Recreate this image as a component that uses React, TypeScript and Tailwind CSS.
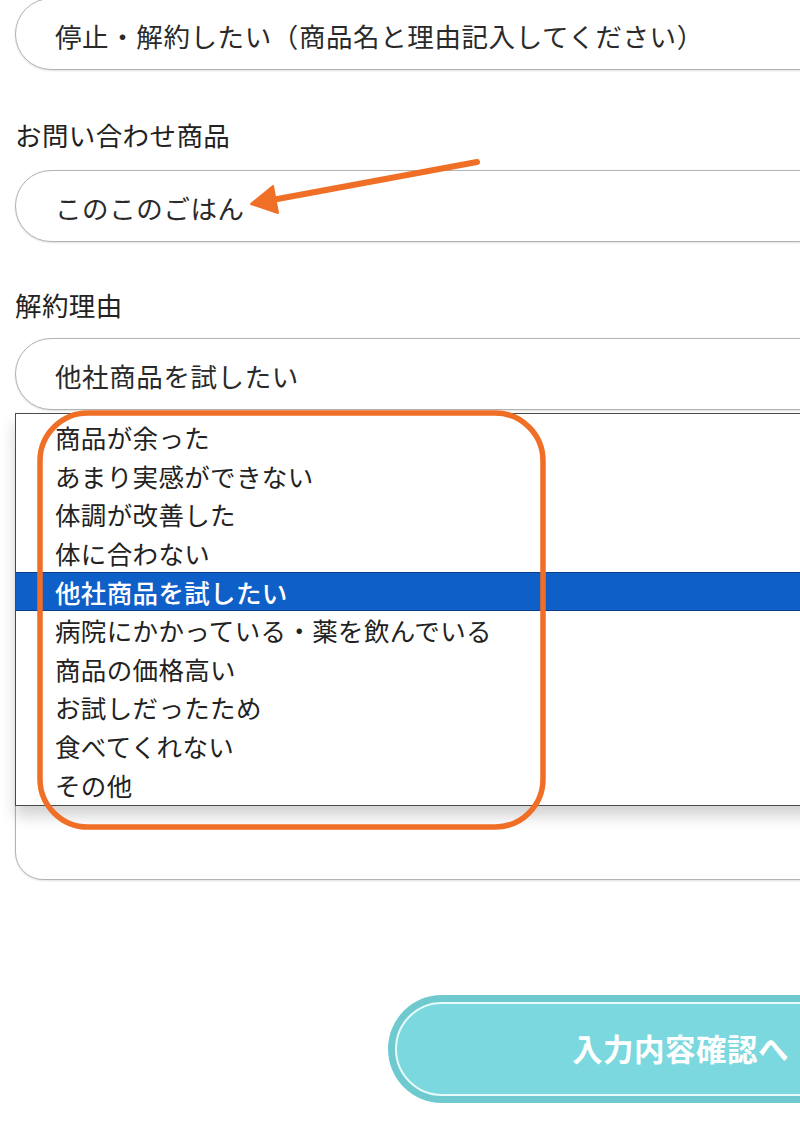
const REASONS = [
  "商品が余った",
  "あまり実感ができない",
  "体調が改善した",
  "体に合わない",
  "他社商品を試したい",
  "病院にかかっている・薬を飲んでいる",
  "商品の価格高い",
  "お試しだったため",
  "食べてくれない",
  "その他",
];

const SELECTED = "他社商品を試したい";

function Field({ value, className = "" }: { value: string; className?: string }) {
  return (
    <div
      className={`flex h-[72px] w-[820px] items-center rounded-[36px] border border-[#b3b3b3] bg-white pl-[39px] pt-[4px] text-[26.5px] tracking-[0.6px] text-[#2a2a2a] shadow-[0_1px_2px_rgba(0,0,0,0.12)] ${className}`}
    >
      {value}
    </div>
  );
}

function Label({ children, className = "" }: { children: string; className?: string }) {
  return (
    <div className={`h-[36px] text-[26.5px] leading-[36px] tracking-[0.4px] text-[#222] ${className}`}>
      {children}
    </div>
  );
}

export default function App() {
  return (
    <div
      className="relative h-[1129px] w-[800px] overflow-hidden bg-white"
      style={{ fontFamily: '"Noto Sans CJK JP", "Noto Sans", sans-serif' }}
    >
      <div className="flex flex-col pl-[15px]">
        <Field value="停止・解約したい（商品名と理由記入してください）" className="-mt-[2px]" />

        <Label className="mt-[47px]">お問い合わせ商品</Label>
        <Field value="このこのごはん" className="mt-[17px]" />

        <Label className="mt-[45px]">解約理由</Label>
        <Field value={SELECTED} className="mt-[15px]" />

        {/* textarea, mostly covered by the open list */}
        <div className="mt-[15px] h-[455px] w-[820px] rounded-[28px] border border-[#b3b3b3] bg-white shadow-[0_1px_2px_rgba(0,0,0,0.12)]" />

        {/* submit */}
        <div className="ml-[373px] mt-[115px] h-[108px] w-[589px] rounded-full bg-[#6fcad0] p-[7px]">
          <div className="flex h-full items-center justify-center rounded-full border-2 border-[#e8fbfb] bg-[#7bd8de]">
            <span className="pr-[4px] text-[30.5px] font-bold tracking-[0.5px] text-white">
              入力内容確認へ
            </span>
          </div>
        </div>
      </div>

      {/* open select list */}
      <div className="absolute left-[15px] top-[413px] w-[800px] border border-[#4a4a4a] bg-white pb-[1px] pt-[4px] shadow-[0_10px_14px_rgba(0,0,0,0.18)]">
        {REASONS.map((reason) => (
          <div
            key={reason}
            className={
              reason === SELECTED
                ? "box-border flex h-[38.6px] items-center border-y border-[#0b3f8c] bg-[#0f5fc8] pl-[39px] text-[25.5px] font-medium tracking-[0.35px] text-white"
                : "flex h-[38.6px] items-center pl-[39px] text-[25.5px] tracking-[0.35px] text-[#222]"
            }
          >
            {reason}
          </div>
        ))}
      </div>

      {/* annotations */}
      <svg className="pointer-events-none absolute left-0 top-0" width="800" height="1129">
        <rect x="40" y="413" width="503" height="414" rx="48" fill="none" stroke="#f06f26" strokeWidth="5.5" />
        <line x1="477" y1="162" x2="272" y2="200" stroke="#f06f26" strokeWidth="6" strokeLinecap="round" />
        <polygon points="251,204 273,186 278,213" fill="#f06f26" stroke="#f06f26" strokeWidth="2" strokeLinejoin="round" />
      </svg>
    </div>
  );
}
